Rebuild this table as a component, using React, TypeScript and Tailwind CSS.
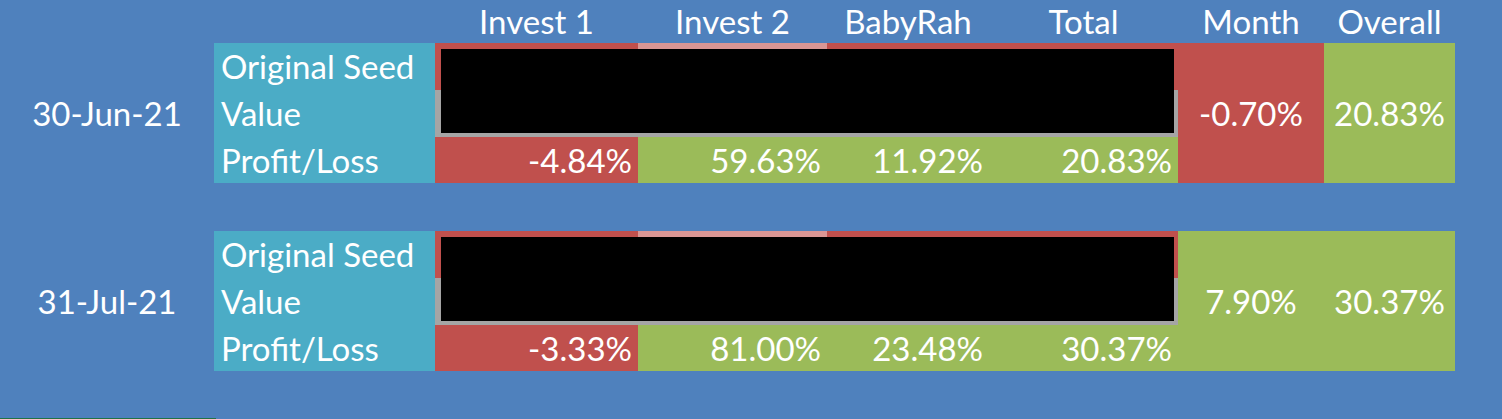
const cols = [
  { name: "Invest 1", w: "w-[203px]" },
  { name: "Invest 2", w: "w-[189px]" },
  { name: "BabyRah", w: "w-[162px]" },
  { name: "Total", w: "w-[189px]" },
  { name: "Month", w: "w-[146px]" },
  { name: "Overall", w: "w-[131px]" },
]

const RED = "bg-[#C0504D]"
const GREEN = "bg-[#9BBB59]"

interface Block {
  date: string
  pl: { value: string; bg: string }[]
  month: { value: string; bg: string }
  overall: { value: string; bg: string }
}

const blocks: Block[] = [
  {
    date: "30-Jun-21",
    pl: [
      { value: "-4.84%", bg: RED },
      { value: "59.63%", bg: GREEN },
      { value: "11.92%", bg: GREEN },
      { value: "20.83%", bg: GREEN },
    ],
    month: { value: "-0.70%", bg: RED },
    overall: { value: "20.83%", bg: GREEN },
  },
  {
    date: "31-Jul-21",
    pl: [
      { value: "-3.33%", bg: RED },
      { value: "81.00%", bg: GREEN },
      { value: "23.48%", bg: GREEN },
      { value: "30.37%", bg: GREEN },
    ],
    month: { value: "7.90%", bg: GREEN },
    overall: { value: "30.37%", bg: GREEN },
  },
]

function BlockRows({ block }: { block: Block }) {
  return (
    <div className="flex h-[140px]">
      {/* date */}
      <div className="w-[214px] flex items-center justify-center">{block.date}</div>

      {/* labels */}
      <div className="w-[221px] bg-[#4BACC6] flex flex-col pl-[7px]">
        <div className="h-[47px] flex items-center">Original Seed</div>
        <div className="h-[47px] flex items-center">Value</div>
        <div className="h-[46px] flex items-center">Profit/Loss</div>
      </div>

      {/* values */}
      <div className="relative w-[743px] flex flex-col">
        <div className="h-[47px] flex">
          <div className="w-[203px] bg-[#C0504D]" />
          <div className="w-[189px] bg-[#DA9694]" />
          <div className="flex-1 bg-[#C0504D]" />
        </div>
        <div className="h-[47px] bg-[#A5A5A5]" />
        <div className="h-[46px] flex">
          {block.pl.map((p, i) => (
            <div
              key={i}
              className={`${cols[i].w} ${p.bg} flex items-center justify-end pr-[6px]`}
            >
              {p.value}
            </div>
          ))}
        </div>
        {/* redacted */}
        <div className="absolute left-[6px] top-[6px] right-[4px] h-[84px] bg-black" />
      </div>

      <div className={`w-[146px] ${block.month.bg} flex items-center justify-center`}>
        {block.month.value}
      </div>
      <div className={`w-[131px] ${block.overall.bg} flex items-center justify-center`}>
        {block.overall.value}
      </div>
    </div>
  )
}

export default function App() {
  return (
    <div className="relative w-[1502px] h-[419px] bg-[#4F81BD] text-white text-[33px] leading-none font-['Lato',sans-serif] overflow-hidden">
      {/* header */}
      <div className="flex h-[43px]">
        <div className="w-[435px]" />
        {cols.map((c) => (
          <div key={c.name} className={`${c.w} flex items-center justify-center`}>
            {c.name}
          </div>
        ))}
      </div>

      <BlockRows block={blocks[0]} />
      <div className="h-[48px]" />
      <BlockRows block={blocks[1]} />

      <div className="absolute left-0 bottom-0 w-[216px] h-px bg-[#217346]" />
    </div>
  )
}
